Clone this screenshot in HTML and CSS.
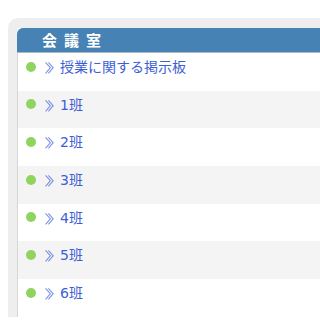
FILE: index.html
```html
<!DOCTYPE html>
<html lang="ja">
<head>
<meta charset="utf-8">
<link rel="stylesheet" href="styles.css">
</head>
<body>
<div class="panel">
  <div class="box">
    <div class="box-head">会議室</div>
    <ul class="list">
      <li class="row"><span class="dot"></span><span class="mark">≫</span><a class="link">授業に関する掲示板</a></li>
      <li class="row alt"><span class="dot"></span><span class="mark">≫</span><a class="link">1班</a></li>
      <li class="row"><span class="dot"></span><span class="mark">≫</span><a class="link">2班</a></li>
      <li class="row alt"><span class="dot"></span><span class="mark">≫</span><a class="link">3班</a></li>
      <li class="row"><span class="dot"></span><span class="mark">≫</span><a class="link">4班</a></li>
      <li class="row alt"><span class="dot"></span><span class="mark">≫</span><a class="link">5班</a></li>
      <li class="row"><span class="dot"></span><span class="mark">≫</span><a class="link">6班</a></li>
    </ul>
  </div>
</div>
</body>
</html>
```

FILE: styles.css
```css
html, body {
  margin: 0;
  padding: 0;
  overflow: hidden;
  background: #ffffff;
  font-family: "DejaVu Sans", "Noto Sans CJK JP", sans-serif;
}
.panel {
  margin: 18px 0 0 8px;
  padding: 10px 0 0 9px;
  background: #eeeeee;
  border-radius: 10px 0 0 0;
}
.box {
  background: #ffffff;
}
.box-head {
  height: 24px;
  line-height: 24px;
  background: #4682b4;
  border-bottom: 1px solid #a9b6c3;
  border-radius: 6px 0 0 0;
  color: #ffffff;
  font-family: "Noto Sans CJK JP", sans-serif;
  font-weight: bold;
  font-size: 15px;
  letter-spacing: 7px;
  padding-left: 25px;
}
.list {
  list-style: none;
  margin: 0;
  padding: 0;
  border-left: 1px solid #d6d6d6;
}
.row {
  display: flex;
  align-items: flex-start;
  height: 37.7px;
  box-sizing: border-box;
  padding: 5px 0 0 8px;
  background: #ffffff;
  font-size: 14px;
  line-height: 18px;
  color: #3d5fd5;
}
.row.alt {
  background: #f4f4f4;
}
.dot {
  width: 10px;
  height: 10px;
  border-radius: 50%;
  background: #8ed45e;
  margin-top: 3.5px;
  margin-right: 8px;
  flex: none;
}
.mark {
  display: inline-block;
  width: 16px;
  flex: none;
  font-family: "Noto Sans CJK JP", sans-serif;
  font-size: 15px;
  color: #4a6ae0;
  transform: scaleX(0.62);
  transform-origin: 2px 50%;
}
.link {
  color: #3d5fd5;
  font-family: "DejaVu Sans", "Noto Sans CJK JP", sans-serif;
}
```
